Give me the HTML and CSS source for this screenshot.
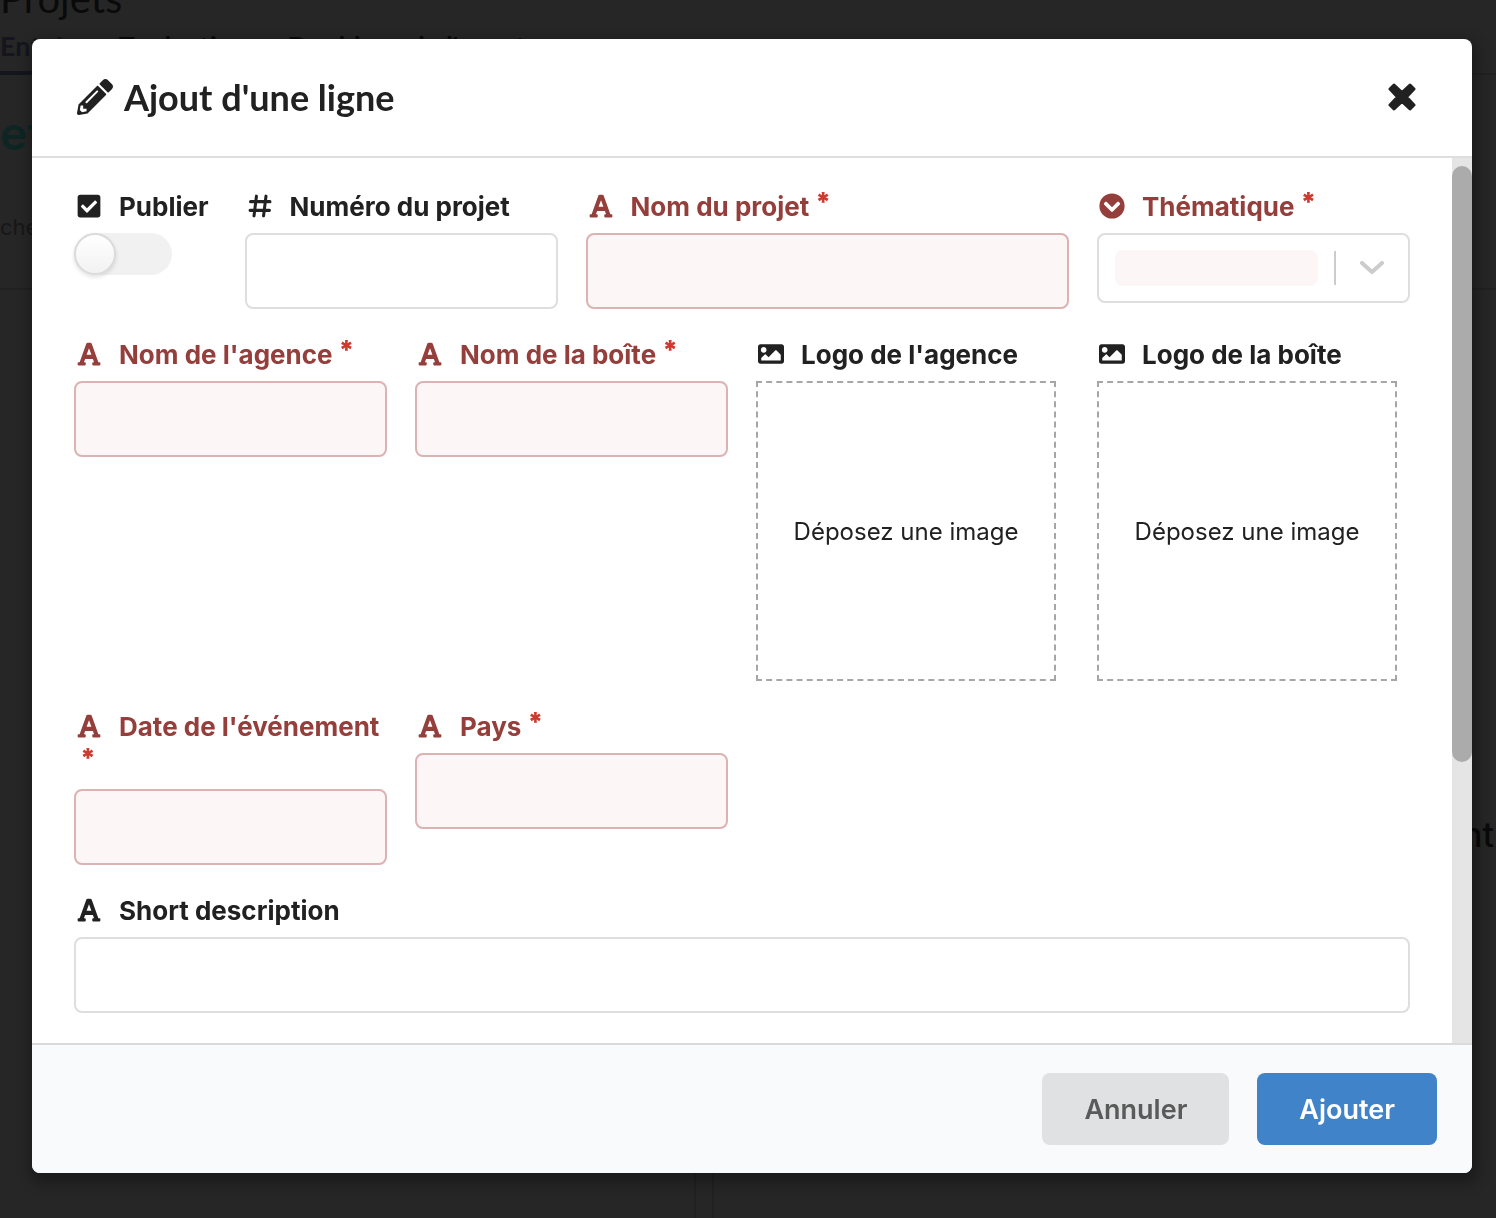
FILE: index.html
```html
<!DOCTYPE html>
<html lang="fr">
<head>
<meta charset="utf-8">
<meta name="viewport" content="width=device-width, initial-scale=1">
<title>Ajout d'une ligne</title>
<link rel="stylesheet" href="styles.css">
</head>
<body>
<svg class="sprite" aria-hidden="true">
  <symbol id="i-font" viewBox="0 0 448 512"><path d="M432 416h-23.410L277.880 53.690A32 32 0 0 0 247.580 32h-47.160a32 32 0 0 0-30.300 21.690L39.410 416H16a16 16 0 0 0-16 16v32a16 16 0 0 0 16 16h128a16 16 0 0 0 16-16v-32a16 16 0 0 0-16-16h-19.580l23.300-64h152.560l23.300 64H304a16 16 0 0 0-16 16v32a16 16 0 0 0 16 16h128a16 16 0 0 0 16-16v-32a16 16 0 0 0-16-16zM176.850 272L224 142.510 271.150 272z"/></symbol>
  <symbol id="i-check" viewBox="0 0 448 512"><path d="M400 480H48c-26.510 0-48-21.490-48-48V80c0-26.510 21.490-48 48-48h352c26.510 0 48 21.490 48 48v352c0 26.510-21.490 48-48 48zm-204.686-98.059l184-184c6.248-6.248 6.248-16.379 0-22.627l-22.627-22.627c-6.248-6.248-16.379-6.249-22.628 0L184 302.745l-70.059-70.059c-6.248-6.248-16.379-6.248-22.628 0l-22.627 22.627c-6.248 6.248-6.248 16.379 0 22.627l104 104c6.249 6.249 16.379 6.249 22.628.001z"/></symbol>
  <symbol id="i-hash" viewBox="0 0 448 512"><path d="M154 62L106 450M342 62L294 450M38 170H420M28 342H410" fill="none" stroke="currentColor" stroke-width="60" stroke-linecap="round"/></symbol>
  <symbol id="i-down" viewBox="0 0 512 512"><path fill-rule="evenodd" d="M256 8a248 248 0 1 1 0 496a248 248 0 0 1 0-496zM239 364.600a24 24 0 0 0 34 0L408.500 229.100a24 24 0 0 0 0-33.900l-17-17a24 24 0 0 0-33.900 0L256 279.800 154.400 178.200a24 24 0 0 0-33.900 0l-17 17a24 24 0 0 0 0 33.900z"/></symbol>
  <symbol id="i-image" viewBox="0 0 512 512"><path d="M464 448H48c-26.510 0-48-21.490-48-48V112c0-26.510 21.490-48 48-48h416c26.510 0 48 21.490 48 48v288c0 26.510-21.490 48-48 48zM112 120c-30.928 0-56 25.072-56 56s25.072 56 56 56 56-25.072 56-56-25.072-56-56-56zM64 384h384V272l-87.515-87.515c-4.686-4.686-12.284-4.686-16.971 0L208 320l-55.515-55.515c-4.686-4.686-12.284-4.686-16.971 0L64 336v48z"/></symbol>
  <symbol id="i-pencil" viewBox="0 0 512 512"><path d="M497.900 142.100l-46.100 46.100c-4.700 4.700-12.300 4.700-17 0l-111-111c-4.700-4.700-4.700-12.300 0-17l46.100-46.100c18.700-18.700 49.100-18.700 67.900 0l60.100 60.100c18.800 18.700 18.800 49.100 0 67.900zM284.200 99.800L21.600 362.400.400 483.900c-2.900 16.400 11.400 30.600 27.800 27.800l121.500-21.300 262.600-262.600c4.700-4.700 4.700-12.300 0-17l-111-111c-4.800-4.700-12.400-4.700-17.100 0zM124.100 339.900c-5.500-5.500-5.500-14.300 0-19.800l154-154c5.500-5.500 14.300-5.500 19.800 0s5.500 14.300 0 19.800l-154 154c-5.500 5.500-14.300 5.500-19.800 0zM88 424h48v36.300l-64.500 11.300-31.100-31.100L51.700 376H88v48z"/></symbol>
  <symbol id="i-close" viewBox="0 0 28 28"><path d="M6 2L14 9.500L22 2L26 6L18.500 14L26 22L22 26L14 18.500L6 26L2 22L9.500 14L2 6Z" stroke="currentColor" stroke-width="3" stroke-linejoin="round"/></symbol>
  <symbol id="i-chevron" viewBox="0 0 24 14"><path d="M2 2L12 11L22 2" fill="none" stroke="currentColor" stroke-width="4" stroke-linecap="round" stroke-linejoin="round"/></symbol>
</svg>

<div class="page" aria-hidden="true">
  <div class="page-title">Projets</div>
  <div class="tabs"><span class="tab tab-active">Entrées</span><span class="tab">Traductions</span><span class="tab">Doublons de l'agent</span></div>
  <div class="page-heading">et</div>
  <div class="page-search">che</div>
  <div class="page-table"><span>nt</span></div>
  <div class="page-columns"><div></div><div></div></div>
</div>

<div class="dimmer">
  <form class="modal" role="dialog" aria-labelledby="modal-title">
    <header class="modal-header">
      <h1 id="modal-title"><svg class="title-icon"><use href="#i-pencil"/></svg>Ajout d'une ligne</h1>
      <button type="button" class="close" aria-label="Fermer"><svg><use href="#i-close"/></svg></button>
    </header>

    <div class="modal-body">
      <div class="fields">
        <div class="field span-1">
          <label for="publier"><svg class="icon"><use href="#i-check"/></svg>Publier</label>
          <input type="checkbox" id="publier" class="toggle">
        </div>
        <div class="field span-2">
          <label for="numero"><svg class="icon"><use href="#i-hash"/></svg>Numéro du projet</label>
          <input type="text" id="numero">
        </div>
        <div class="field span-3 error">
          <label for="nom"><svg class="icon"><use href="#i-font"/></svg>Nom du projet<span class="required">*</span></label>
          <input type="text" id="nom" required>
        </div>
        <div class="field span-2 error">
          <label for="theme"><svg class="icon"><use href="#i-down"/></svg>Thématique<span class="required">*</span></label>
          <div class="select"><select id="theme" required><option></option></select><svg><use href="#i-chevron"/></svg></div>
        </div>

        <div class="field span-2 error">
          <label for="agence"><svg class="icon"><use href="#i-font"/></svg>Nom de l'agence<span class="required">*</span></label>
          <input type="text" id="agence" required>
        </div>
        <div class="field span-2 error">
          <label for="boite"><svg class="icon"><use href="#i-font"/></svg>Nom de la boîte<span class="required">*</span></label>
          <input type="text" id="boite" required>
        </div>
        <div class="field span-2">
          <label for="logo-agence"><svg class="icon"><use href="#i-image"/></svg>Logo de l'agence</label>
          <button type="button" id="logo-agence" class="drop">Déposez une image</button>
        </div>
        <div class="field span-2">
          <label for="logo-boite"><svg class="icon"><use href="#i-image"/></svg>Logo de la boîte</label>
          <button type="button" id="logo-boite" class="drop">Déposez une image</button>
        </div>

        <div class="field span-2 error">
          <label for="date"><svg class="icon"><use href="#i-font"/></svg>Date de l'événement<span class="required">*</span></label>
          <input type="text" id="date" required>
        </div>
        <div class="field span-2 error">
          <label for="pays"><svg class="icon"><use href="#i-font"/></svg>Pays<span class="required">*</span></label>
          <input type="text" id="pays" required>
        </div>

        <div class="field span-8">
          <label for="description"><svg class="icon"><use href="#i-font"/></svg>Short description</label>
          <input type="text" id="description">
        </div>
      </div>
      <div class="scrollbar" aria-hidden="true"><div class="thumb"></div></div>
    </div>

    <footer class="modal-footer">
      <button type="button" class="button">Annuler</button>
      <button type="submit" class="button primary">Ajouter</button>
    </footer>
  </form>
</div>
</body>
</html>
```
FILE: styles.css
```css
*,
*::before {
  box-sizing: border-box;
}

body {
  margin: 0;
  height: 100vh;
  overflow: hidden;
  background: #262626;
  color: #212121;
  font-family: Inter, "Liberation Sans", sans-serif;
  font-size: 26px;
}

input,
select,
button {
  margin: 0;
  font: inherit;
  color: inherit;
}

svg {
  fill: currentColor;
}

.sprite {
  display: none;
}

/* Dimmed page behind the dialog */
.page {
  display: flex;
  flex-direction: column;
  height: 100vh;
  color: #0a0a0a;
}

.page-title {
  height: 28px;
  display: flex;
  align-items: flex-end;
  padding-bottom: 4px;
  font-family: Lato, sans-serif;
  font-size: 40px;
  line-height: 52px;
}

.tabs {
  display: flex;
  gap: 28px;
  height: 47px;
  border-bottom: 2px solid #212121;
  font-family: Lato, sans-serif;
  font-size: 27px;
  font-weight: 700;
  line-height: 36px;
}

.tab-active {
  height: 47px;
  border-bottom: 4px solid #15151d;
  color: #15151d;
}

.page-heading {
  height: 117px;
  color: #0e2524;
  font-size: 46px;
  font-weight: 600;
  line-height: 116px;
}

.page-search {
  height: 98px;
  border-bottom: 2px solid #212121;
  color: #171717;
  font-size: 22px;
  line-height: 70px;
}

.page-table {
  flex: 1;
  display: flex;
  align-items: center;
  justify-content: flex-end;
  padding: 240px 2px 0 0;
  font-size: 34px;
  font-weight: 500;
}

.page-columns {
  display: grid;
  grid-template-columns: 696px 1fr;
  gap: 16px;
  height: 80px;
}

.page-columns div {
  border: solid #212121;
  border-width: 0 2px 0 0;
}

.page-columns div + div {
  border-width: 0 0 0 2px;
}

/* Dialog */
.dimmer {
  position: fixed;
  inset: 0;
  display: flex;
  padding: 39px 24px 45px 32px;
}

.modal {
  flex: 1;
  display: flex;
  flex-direction: column;
  overflow: hidden;
  border-radius: 8px;
  background: #fff;
  box-shadow: 2px 6px 14px 4px rgba(0, 0, 0, 0.3);
}

.modal-header {
  display: flex;
  align-items: center;
  justify-content: space-between;
  height: 119px;
  padding: 0 56px 2px 44px;
  border-bottom: 2px solid #dedede;
}

h1 {
  display: flex;
  align-items: center;
  gap: 10px;
  margin: 0;
  font-family: Lato, sans-serif;
  font-size: 36px;
  font-weight: 700;
  line-height: 46px;
}

.title-icon {
  width: 38px;
  height: 36px;
}

.close {
  display: flex;
  padding: 0;
  border: 0;
  background: none;
}

.close svg {
  width: 28px;
  height: 28px;
}

.modal-body {
  flex: 1;
  display: flex;
  min-height: 0;
}

.fields {
  flex: 1;
  display: grid;
  grid-template-columns: repeat(8, minmax(0, 1fr));
  align-content: start;
  gap: 28px;
  padding: 31px 42px;
}

.span-1 { grid-column: span 1; }
.span-2 { grid-column: span 2; }
.span-3 { grid-column: span 3; }
.span-8 { grid-column: span 8; }

label {
  display: block;
  margin-bottom: 8px;
  font-weight: 700;
  line-height: 36px;
}

.icon {
  width: 30px;
  height: 26px;
  margin-right: 15px;
  vertical-align: -3px;
}

.error label {
  color: #943f3b;
}

.required {
  display: inline-block;
  padding-left: 6px;
  color: #cf3a2f;
  font-weight: 900;
  line-height: 26px;
  vertical-align: top;
}

input[type="text"] {
  display: block;
  width: 100%;
  height: 76px;
  padding: 0 26px;
  border: 2px solid #dedede;
  border-radius: 8px;
  background: #fff;
}

.error input[type="text"] {
  border-color: #dbb3b3;
  background: #fcf6f6;
}

.toggle {
  appearance: none;
  display: block;
  width: 98px;
  height: 42px;
  border-radius: 21px;
  background: #f1f1f1;
}

.toggle::before {
  content: "";
  display: block;
  width: 42px;
  height: 42px;
  border: 2px solid #dadada;
  border-radius: 50%;
  background: linear-gradient(#fff, #f2f2f2);
  box-shadow: 0 2px 4px rgba(0, 0, 0, 0.12);
}

.select {
  display: flex;
  align-items: center;
  height: 70px;
  padding: 0 24px 0 16px;
  border: 2px solid #dedede;
  border-radius: 8px;
  color: #ccc;
}

.select select {
  appearance: none;
  flex: 1;
  min-width: 0;
  height: 36px;
  border: 0;
  border-radius: 8px;
  background: #fcf6f6;
}

.select svg {
  width: 50px;
  height: 34px;
  margin-left: 16px;
  padding: 10px 0 10px 24px;
  border-left: 2px solid #ccc;
}

.drop {
  display: block;
  width: 300px;
  max-width: 100%;
  height: 300px;
  padding: 0;
  border: 2px dashed #a6a6a6;
  background: none;
  font-size: 24px;
}

.scrollbar {
  width: 20px;
  padding-top: 8px;
  background: #e5e5e5;
}

.thumb {
  height: 68%;
  border-radius: 10px;
  background: #ababab;
}

.modal-footer {
  display: flex;
  justify-content: flex-end;
  gap: 28px;
  padding: 28px 35px;
  border-top: 2px solid #d9dadb;
  background: #f9fafc;
}

.button {
  height: 72px;
  padding: 0 42px;
  border: 0;
  border-radius: 8px;
  background: #e0e1e2;
  color: #5a5a5a;
  font-size: 27px;
  font-weight: 600;
}

.primary {
  background: #4183c9;
  color: #fff;
}
```
